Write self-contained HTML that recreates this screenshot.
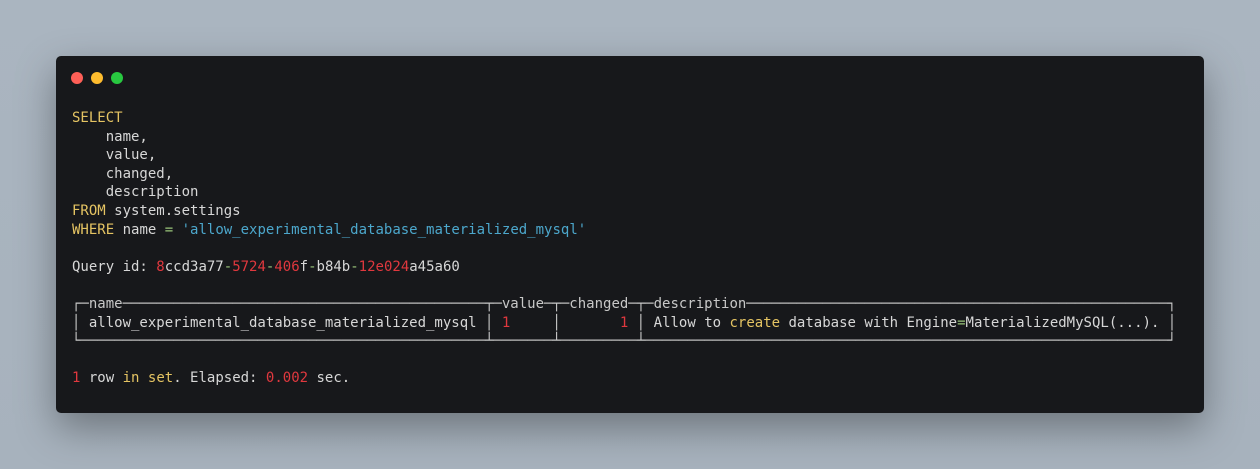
<!DOCTYPE html>
<html><head><meta charset="utf-8"><style>
html,body{margin:0;padding:0;}
body{width:1260px;height:469px;background:linear-gradient(180deg,#aab5c0,#a7b2bd);position:relative;overflow:hidden;}
.win{position:absolute;left:56px;top:56px;width:1148px;height:357px;background:#17181b;border-radius:5px;box-shadow:0 15px 40px rgba(0,0,0,.35);}
.dot{position:absolute;top:16px;width:12px;height:12px;border-radius:50%;}
pre{position:absolute;left:16px;top:53px;margin:0;font-family:"DejaVu Sans Mono","Liberation Mono",monospace;font-size:14px;line-height:18.6px;color:#d7d7d7;}
.y{color:#e5c463}.r{color:#e0383e}.b{color:#4ca7cc}.g{color:#98c379}.w{color:#c8c8c8}
</style></head><body>
<div class="win">
<div class="dot" style="left:15px;background:#fe5f57"></div>
<div class="dot" style="left:35px;background:#febc2e"></div>
<div class="dot" style="left:55px;background:#28c840"></div>
<pre><span class="y">SELECT</span>
    name,
    value,
    changed,
    description
<span class="y">FROM</span> system.settings
<span class="y">WHERE</span> name <span class="g">=</span> <span class="b">'allow_experimental_database_materialized_mysql'</span>

Query id: <span class="r">8</span>ccd3a77<span class="g">-</span><span class="r">5724</span><span class="g">-</span><span class="r">406</span>f<span class="g">-</span>b84b<span class="g">-</span><span class="r">12e024</span>a45a60

<span class="w">┌─name───────────────────────────────────────────┬─value─┬─changed─┬─description──────────────────────────────────────────────────┐
│ </span>allow_experimental_database_materialized_mysql<span class="w"> │ </span><span class="r">1</span><span class="w">     │       </span><span class="r">1</span><span class="w"> │ </span>Allow to <span class="y">create</span> database with Engine<span class="g">=</span>MaterializedMySQL(...).<span class="w"> │
└────────────────────────────────────────────────┴───────┴─────────┴──────────────────────────────────────────────────────────────┘</span>

<span class="r">1</span> row <span class="y">in</span> <span class="y">set</span>. Elapsed: <span class="r">0.002</span> sec.</pre>
</div>
</body></html>
